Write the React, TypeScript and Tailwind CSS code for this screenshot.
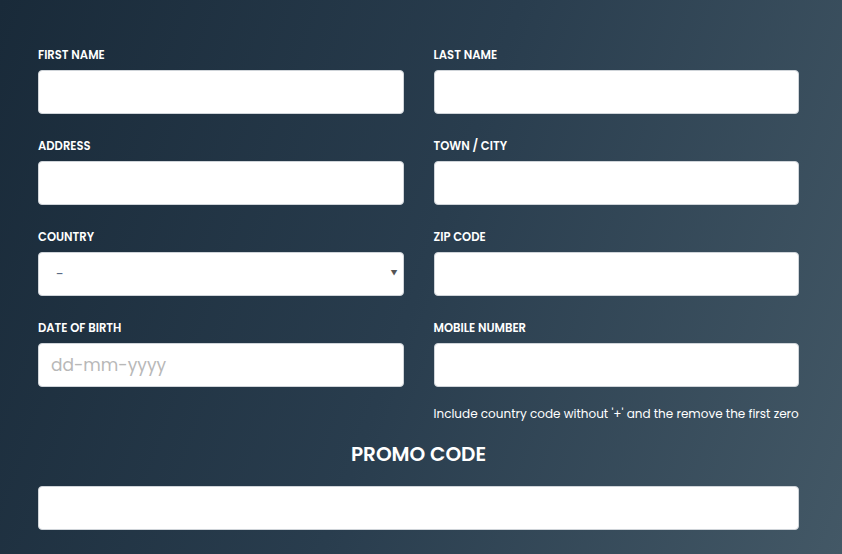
import React from 'react';

const font = { fontFamily: 'Poppins, Inter, "Open Sans", sans-serif' };

function Field({ label, children }: { label: string; children: React.ReactNode }) {
  return (
    <div className="flex flex-col">
      <label className="text-[11.6px] leading-4 font-semibold uppercase text-white">{label}</label>
      <div className="mt-[7px]">{children}</div>
    </div>
  );
}

const inputCls =
  'w-full h-[44px] bg-white rounded-[4px] border border-[#cfd4d9] px-3 text-[17px] text-[#333] placeholder:text-[#b8b8b8] outline-none';

export default function App() {
  return (
    <div
      className="w-[842px] h-[554px] overflow-hidden bg-[linear-gradient(110deg,#192a39_0%,#293d4e_50%,#435866_100%)] pl-[38px] pr-[43px] pt-[47px]"
      style={font}
    >
      <div className="grid grid-cols-2 gap-x-[30px] gap-y-[24px]">
        <Field label="First Name">
          <input className={inputCls} />
        </Field>
        <Field label="Last Name">
          <input className={inputCls} />
        </Field>
        <Field label="Address">
          <input className={inputCls} />
        </Field>
        <Field label="Town / City">
          <input className={inputCls} />
        </Field>
        <Field label="Country">
          <div className="relative">
            <div className={inputCls + ' flex items-center pl-[17px]'}>
              <span className="text-[14px] text-[#5a6a85]">-</span>
            </div>
            <span className="absolute right-[6px] top-1/2 -translate-y-1/2 text-[7px] text-[#555]">▼</span>
          </div>
        </Field>
        <Field label="Zip Code">
          <input className={inputCls} />
        </Field>
        <Field label="Date of Birth">
          <input className={inputCls} placeholder="dd-mm-yyyy" />
        </Field>
        <Field label="Mobile Number">
          <input className={inputCls} />
        </Field>
      </div>
      <div className="grid grid-cols-2 gap-x-[30px]">
        <div />
        <p className="mt-[19px] text-[12px] leading-4 text-white whitespace-nowrap">
          Include country code without '+' and the remove the first zero
        </p>
      </div>
      <h2 className="mt-[18px] text-center text-[20px] leading-7 font-semibold text-white">PROMO CODE</h2>
      <input className={inputCls + ' mt-[18px]'} />
    </div>
  );
}
